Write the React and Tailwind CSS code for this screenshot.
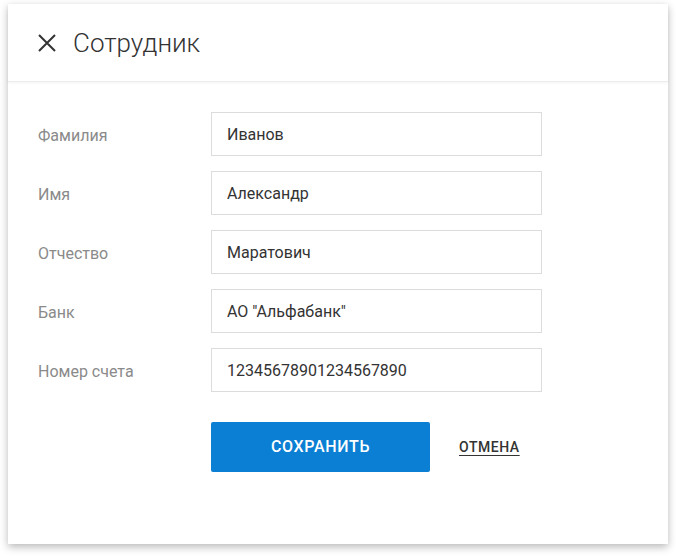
import React, { useState } from 'react';

const fields = [
    { label: 'Фамилия', value: 'Иванов' },
    { label: 'Имя', value: 'Александр' },
    { label: 'Отчество', value: 'Маратович' },
    { label: 'Банк', value: 'АО "Альфабанк"' },
    { label: 'Номер счета', value: '12345678901234567890' },
];

const App = () => {
    const [values, setValues] = useState(fields.map((f) => f.value));

    return (
        <div className="w-[676px] h-[556px] bg-white pl-2 pt-1" style={{ fontFamily: 'Roboto, sans-serif' }}>
            <div className="w-[660px] h-[540px] bg-white shadow-[0_3px_8px_rgba(0,0,0,0.28)] flex flex-col">
                <div className="h-[78px] flex items-center pl-[30px] border-b border-[#ececec] shadow-[0_1px_3px_rgba(0,0,0,0.05)]">
                    <svg width="18" height="18" viewBox="0 0 18 18" className="shrink-0">
                        <path d="M1 1 L17 17 M17 1 L1 17" stroke="#333" strokeWidth="2" fill="none" />
                    </svg>
                    <h1 className="ml-[17px] text-[26px] font-light text-[#333] leading-none">Сотрудник</h1>
                </div>
                <div className="flex flex-col gap-[15px] pt-[30px] pl-[30px]">
                    {fields.map((f, i) => (
                        <div key={f.label} className="flex items-center">
                            <label className="w-[173px] pt-[3px] text-[16px] text-[#8a8a8a]">{f.label}</label>
                            <input
                                value={values[i]}
                                onChange={(e) => setValues(values.map((v, j) => (j === i ? e.target.value : v)))}
                                className="w-[331px] h-[44px] border border-[#dcdcdc] px-[15px] pt-[1px] text-[16px] text-[#333] focus:outline-none"
                            />
                        </div>
                    ))}
                </div>
                <div className="flex items-center pl-[203px] mt-[30px]">
                    <button className="w-[219px] h-[50px] bg-[#0a7fd3] rounded-[2px] text-white text-[16px] font-medium tracking-[0.04em]">
                        СОХРАНИТЬ
                    </button>
                    <button className="ml-[29px] text-[14px] font-medium text-[#333] tracking-[0.04em] underline underline-offset-[3px]">
                        ОТМЕНА
                    </button>
                </div>
            </div>
        </div>
    );
};

export default App;
